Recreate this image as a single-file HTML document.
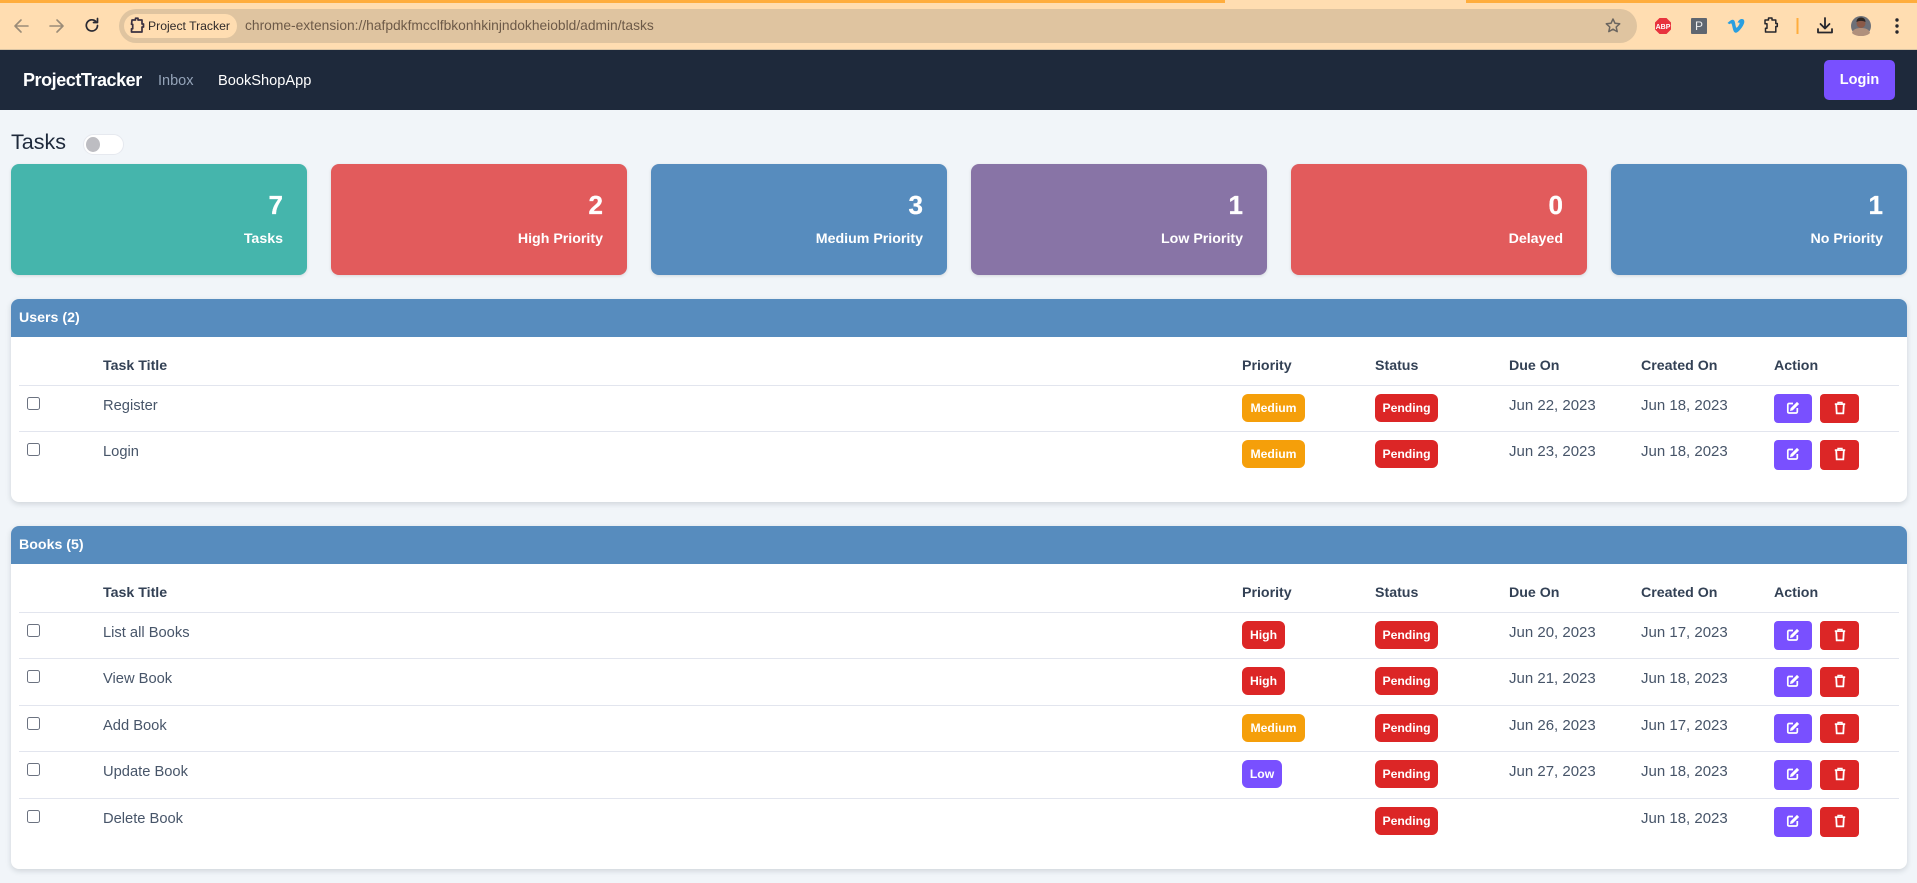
<!DOCTYPE html>
<html><head><meta charset="utf-8"><title>Project Tracker</title>
<style>
*{box-sizing:border-box}
html,body{margin:0;padding:0}
body{width:1917px;height:883px;overflow:hidden;position:relative;background:#f1f5f9;font-family:"Liberation Sans",sans-serif;color:#475569}
.a{position:absolute;white-space:nowrap}
#bar{left:0;top:0;width:1917px;height:50px;background:#ffddb1;border-bottom:1px solid #d9c4a4}
.st{top:0;height:3px;background:#ffad3d}
#addr{left:119px;top:9px;width:1518px;height:34px;border-radius:17px;background:#dfc4a0}
#chip{left:124px;top:14px;width:113px;height:24px;border-radius:12px;background:#ffddb1}
#nav{left:0;top:50px;width:1917px;height:60px;background:#1e293b}
.card{top:164px;width:296px;height:111px;border-radius:8px;box-shadow:0 1px 3px rgba(0,0,0,.12);color:#fff}
.card b{position:absolute;right:24px;top:24px;font-size:26px;line-height:34px;-webkit-text-stroke:.3px #fff}
.card span{position:absolute;right:24px;top:65px;font-size:14.2px;line-height:20px;font-weight:bold}
.panel{left:11px;width:1896px;background:#fff;border-radius:8px;box-shadow:0 2px 6px rgba(30,41,59,.16)}
.ph{position:absolute;left:0;top:0;width:100%;height:38px;background:#578cbe;border-radius:8px 8px 0 0;color:#fff;font-weight:bold;font-size:14.2px;line-height:39px;padding-left:8px}
.th{position:absolute;font-size:14.2px;line-height:20px;font-weight:bold;color:#334155;white-space:nowrap;margin-top:1px}
.r{position:absolute;left:19px;width:1880px;height:1px;background:#e2e5ee}
.r>*{position:absolute;white-space:nowrap}
.cb{left:8px;top:12px;width:13px;height:13px;border:1px solid #6b7280;border-radius:2.5px;background:#fff}
.t{top:11px;font-size:14.7px;line-height:20px;color:#475569}
.d{top:11px;font-size:15px;line-height:20px;color:#475569}
.bd{top:9px;height:28px;border-radius:6px;color:#fff;font-size:12.2px;font-weight:bold;line-height:28px;text-align:center}
.btn{top:9px;height:29px;border-radius:4px}
.btn svg{position:absolute;left:50%;top:50%;transform:translate(-50%,-50%);margin-top:-1px}
.pu{background:#7950ff}.re{background:#dc2626}.or{background:#f59f0a}
</style></head><body>
<svg width="0" height="0" style="position:absolute"><defs>
<symbol id="e" viewBox="0 0 14 14"><path d="M7 2.5H3a1.2 1.2 0 0 0-1.2 1.2v7.1A1.2 1.2 0 0 0 3 12h7.1a1.2 1.2 0 0 0 1.2-1.2V7" fill="none" stroke="#fff" stroke-width="1.7"/><path d="M11 .9l2.1 2.1-6.4 6.4-2.7.6.6-2.7z" fill="#fff"/></symbol>
<symbol id="x" viewBox="0 0 14 14"><path d="M1.8 3.1h10.4" stroke="#fff" stroke-width="1.7" fill="none"/><path d="M5 3V1.4h4V3" stroke="#fff" stroke-width="1.4" fill="none"/><path d="M3.2 3.4l.5 9h6.6l.5-9" stroke="#fff" stroke-width="1.8" fill="none"/></symbol>
</defs></svg>

<div class="a" id="bar"></div>
<div class="a st" style="left:0;width:1225px"></div>
<div class="a st" style="left:1466px;width:451px"></div>
<svg class="a" style="left:0;top:0" width="1917" height="50" viewBox="0 0 1917 50">
<g fill="none" stroke-linecap="round" stroke-linejoin="round">
<path d="M28 26H16M21 20l-6 6 6 6" stroke="#9b8c78" stroke-width="1.6"/>
<path d="M50 26h12M57 20l6 6-6 6" stroke="#9b8c78" stroke-width="1.6"/>
<path d="M97.5 25.5a5.6 5.6 0 1 1-1.8-4.2M97.5 18.5v4h-4" stroke="#2a2a33" stroke-width="1.7"/>
<path d="M1765 20h3.500v-2h3.500v2h3.800v3.500h1.500v3h-1.500v5.500h-10.300v-3.800h1.500v-4.500h-2z" stroke="#26262c" stroke-width="1.500"/>
<path d="M1825 18v10M1820.500 24l4.500 4.500 4.500-4.500M1818 29v3.500h14V29" stroke="#26262c" stroke-width="1.800"/>
</g>
<polygon points="1659.500,18 1666.500,18 1671,22.500 1671,29.500 1666.500,34 1659.500,34 1655,29.500 1655,22.500" fill="#e8333e"/>
<text x="1663" y="29" text-anchor="middle" font-family="Liberation Sans" font-weight="bold" font-size="7" fill="#fff">ABP</text>
<rect x="1691" y="18" width="16" height="16" rx="1" fill="#5f6670"/>
<text x="1699" y="30" text-anchor="middle" font-family="Liberation Sans" font-size="12" fill="#eee">P</text>
<path d="M1727.500 23c2-1.800 3.500-3.300 5-3.300 1.600 0 2.300 1.200 2.700 3.700.4 2.400.8 4.300 1.400 4.300.8 0 3-3.200 3-4.400 0-1-1-1-2-.5.800-2.600 2.600-3.900 4.500-3.800 1.600.1 2.300 1.200 2.200 3-.2 3-4.700 9.500-7.800 10.600-2.400.7-3.200-2-3.800-4.600-.5-2-.9-4.600-1.600-4.600-.5 0-1.600.8-1.600.8z" fill="#2a9fe0"/>
<rect x="1796.500" y="18" width="2" height="16" fill="#ffad3d"/>
<circle cx="1861" cy="26" r="10" fill="#6d7078"/>
<path d="M1852 33c1-4 5-5 9-5s8 1 9 5c-2 2-5 3-9 3s-7-1-9-3z" fill="#b0907c"/>
<circle cx="1861" cy="23.500" r="4.500" fill="#8a5a48"/>
<path d="M1856.500 22c0-3 2-4.500 4.500-4.500s4.500 1.500 4.500 4.500c-3-1.500-6-1.500-9 0z" fill="#2b2522"/>
<circle cx="1897" cy="20" r="1.700" fill="#26262c"/><circle cx="1897" cy="26" r="1.700" fill="#26262c"/><circle cx="1897" cy="32" r="1.700" fill="#26262c"/>
</svg>
<div class="a" id="addr"></div>
<div class="a" id="chip"></div>
<svg class="a" style="left:124px;top:14px" width="24" height="24" viewBox="0 0 24 24"><path d="M8 6h3.500v-1.800h2.500v1.800h4v4h1.500v3h-1.500v5h-10.500v-3.200h1.200v-4.500h-1.200z" fill="none" stroke="#3a3040" stroke-width="1.700" stroke-linejoin="round"/></svg>
<div class="a" style="left:148px;top:16px;font-size:12.2px;line-height:20px;color:#2f2a2a">Project Tracker</div>
<div class="a" style="left:245px;top:16px;font-size:13.800px;line-height:20px;color:#6d5a48">chrome-extension://hafpdkfmcclfbkonhkinjndokheiobld/admin/tasks</div>
<svg class="a" style="left:1600px;top:13px" width="26" height="26" viewBox="0 0 26 26"><path d="M13 6l2 4.300 4.700.5-3.500 3.200 1 4.600-4.200-2.400-4.200 2.400 1-4.600-3.500-3.200 4.700-.5z" fill="none" stroke="#6b6660" stroke-width="1.500" stroke-linejoin="round"/></svg>

<div class="a" id="nav"></div>
<div class="a" style="left:23px;top:68px;font-size:18px;line-height:24px;font-weight:bold;color:#fff;letter-spacing:-.45px">ProjectTracker</div>
<div class="a" style="left:158px;top:71px;font-size:14.500px;line-height:20px;color:#94a3b8">Inbox</div>
<div class="a" style="left:218px;top:71px;font-size:14.600px;line-height:20px;color:#fff;font-weight:500">BookShopApp</div>
<div class="a" style="left:1824px;top:60px;width:71px;height:40px;border-radius:5px;background:#7950ff;color:#fff;font-weight:bold;font-size:14.500px;line-height:41px;text-align:center">Login</div>

<div class="a" style="left:11px;top:128px;font-size:21.500px;line-height:28px;color:#1e293b">Tasks</div>
<div class="a" style="left:83px;top:134px;width:41px;height:21px;border-radius:11px;background:#fff;border:1px solid #e6e9ef"></div>
<div class="a" style="left:86px;top:137px;width:14px;height:15px;border-radius:50%;background:#bdbdc2"></div>

<div class="a card" style="left:11px;background:#45b5ac"><b>7</b><span>Tasks</span></div>
<div class="a card" style="left:331px;background:#e25b5c"><b>2</b><span>High Priority</span></div>
<div class="a card" style="left:651px;background:#578cbe"><b>3</b><span>Medium Priority</span></div>
<div class="a card" style="left:971px;background:#8874a6"><b>1</b><span>Low Priority</span></div>
<div class="a card" style="left:1291px;background:#e25b5c"><b>0</b><span>Delayed</span></div>
<div class="a card" style="left:1611px;background:#578cbe"><b>1</b><span>No Priority</span></div>

<div class="a panel" style="top:299px;height:203px"><div class="ph">Users (2)</div></div>
<div class="th" style="left:103px;top:355px">Task Title</div>
<div class="th" style="left:1242px;top:355px">Priority</div>
<div class="th" style="left:1375px;top:355px">Status</div>
<div class="th" style="left:1509px;top:355px">Due On</div>
<div class="th" style="left:1641px;top:355px">Created On</div>
<div class="th" style="left:1774px;top:355px">Action</div>

<div class="r" style="top:385px"><i class="cb"></i><span class="t" style="left:84px">Register</span><span class="bd or" style="left:1223px;width:63px">Medium</span><span class="bd re" style="left:1356px;width:63px">Pending</span><span class="d" style="left:1490px">Jun 22, 2023</span><span class="d" style="left:1622px">Jun 18, 2023</span><span class="btn pu" style="left:1755px;width:38px"><svg width="14" height="14"><use href="#e"/></svg></span><span class="btn re" style="left:1801px;width:39px"><svg width="14" height="14"><use href="#x"/></svg></span></div>
<div class="r" style="top:431px"><i class="cb"></i><span class="t" style="left:84px">Login</span><span class="bd or" style="left:1223px;width:63px">Medium</span><span class="bd re" style="left:1356px;width:63px">Pending</span><span class="d" style="left:1490px">Jun 23, 2023</span><span class="d" style="left:1622px">Jun 18, 2023</span><span class="btn pu" style="left:1755px;width:38px;height:30px"><svg width="14" height="14"><use href="#e"/></svg></span><span class="btn re" style="left:1801px;width:39px;height:30px"><svg width="14" height="14"><use href="#x"/></svg></span></div>

<div class="a panel" style="top:526px;height:343px"><div class="ph">Books (5)</div></div>
<div class="th" style="left:103px;top:582px">Task Title</div>
<div class="th" style="left:1242px;top:582px">Priority</div>
<div class="th" style="left:1375px;top:582px">Status</div>
<div class="th" style="left:1509px;top:582px">Due On</div>
<div class="th" style="left:1641px;top:582px">Created On</div>
<div class="th" style="left:1774px;top:582px">Action</div>

<div class="r" style="top:612px"><i class="cb"></i><span class="t" style="left:84px">List all Books</span><span class="bd re" style="left:1223px;width:43px">High</span><span class="bd re" style="left:1356px;width:63px">Pending</span><span class="d" style="left:1490px">Jun 20, 2023</span><span class="d" style="left:1622px">Jun 17, 2023</span><span class="btn pu" style="left:1755px;width:38px"><svg width="14" height="14"><use href="#e"/></svg></span><span class="btn re" style="left:1801px;width:39px"><svg width="14" height="14"><use href="#x"/></svg></span></div>
<div class="r" style="top:658px"><i class="cb"></i><span class="t" style="left:84px">View Book</span><span class="bd re" style="left:1223px;width:43px">High</span><span class="bd re" style="left:1356px;width:63px">Pending</span><span class="d" style="left:1490px">Jun 21, 2023</span><span class="d" style="left:1622px">Jun 18, 2023</span><span class="btn pu" style="left:1755px;width:38px;height:30px"><svg width="14" height="14"><use href="#e"/></svg></span><span class="btn re" style="left:1801px;width:39px;height:30px"><svg width="14" height="14"><use href="#x"/></svg></span></div>
<div class="r" style="top:705px"><i class="cb"></i><span class="t" style="left:84px">Add Book</span><span class="bd or" style="left:1223px;width:63px">Medium</span><span class="bd re" style="left:1356px;width:63px">Pending</span><span class="d" style="left:1490px">Jun 26, 2023</span><span class="d" style="left:1622px">Jun 17, 2023</span><span class="btn pu" style="left:1755px;width:38px"><svg width="14" height="14"><use href="#e"/></svg></span><span class="btn re" style="left:1801px;width:39px"><svg width="14" height="14"><use href="#x"/></svg></span></div>
<div class="r" style="top:751px"><i class="cb"></i><span class="t" style="left:84px">Update Book</span><span class="bd pu" style="left:1223px;width:40px">Low</span><span class="bd re" style="left:1356px;width:63px">Pending</span><span class="d" style="left:1490px">Jun 27, 2023</span><span class="d" style="left:1622px">Jun 18, 2023</span><span class="btn pu" style="left:1755px;width:38px;height:30px"><svg width="14" height="14"><use href="#e"/></svg></span><span class="btn re" style="left:1801px;width:39px;height:30px"><svg width="14" height="14"><use href="#x"/></svg></span></div>
<div class="r" style="top:798px"><i class="cb"></i><span class="t" style="left:84px">Delete Book</span><span class="bd re" style="left:1356px;width:63px">Pending</span><span class="d" style="left:1622px">Jun 18, 2023</span><span class="btn pu" style="left:1755px;width:38px;height:30px"><svg width="14" height="14"><use href="#e"/></svg></span><span class="btn re" style="left:1801px;width:39px;height:30px"><svg width="14" height="14"><use href="#x"/></svg></span></div>
</body></html>
